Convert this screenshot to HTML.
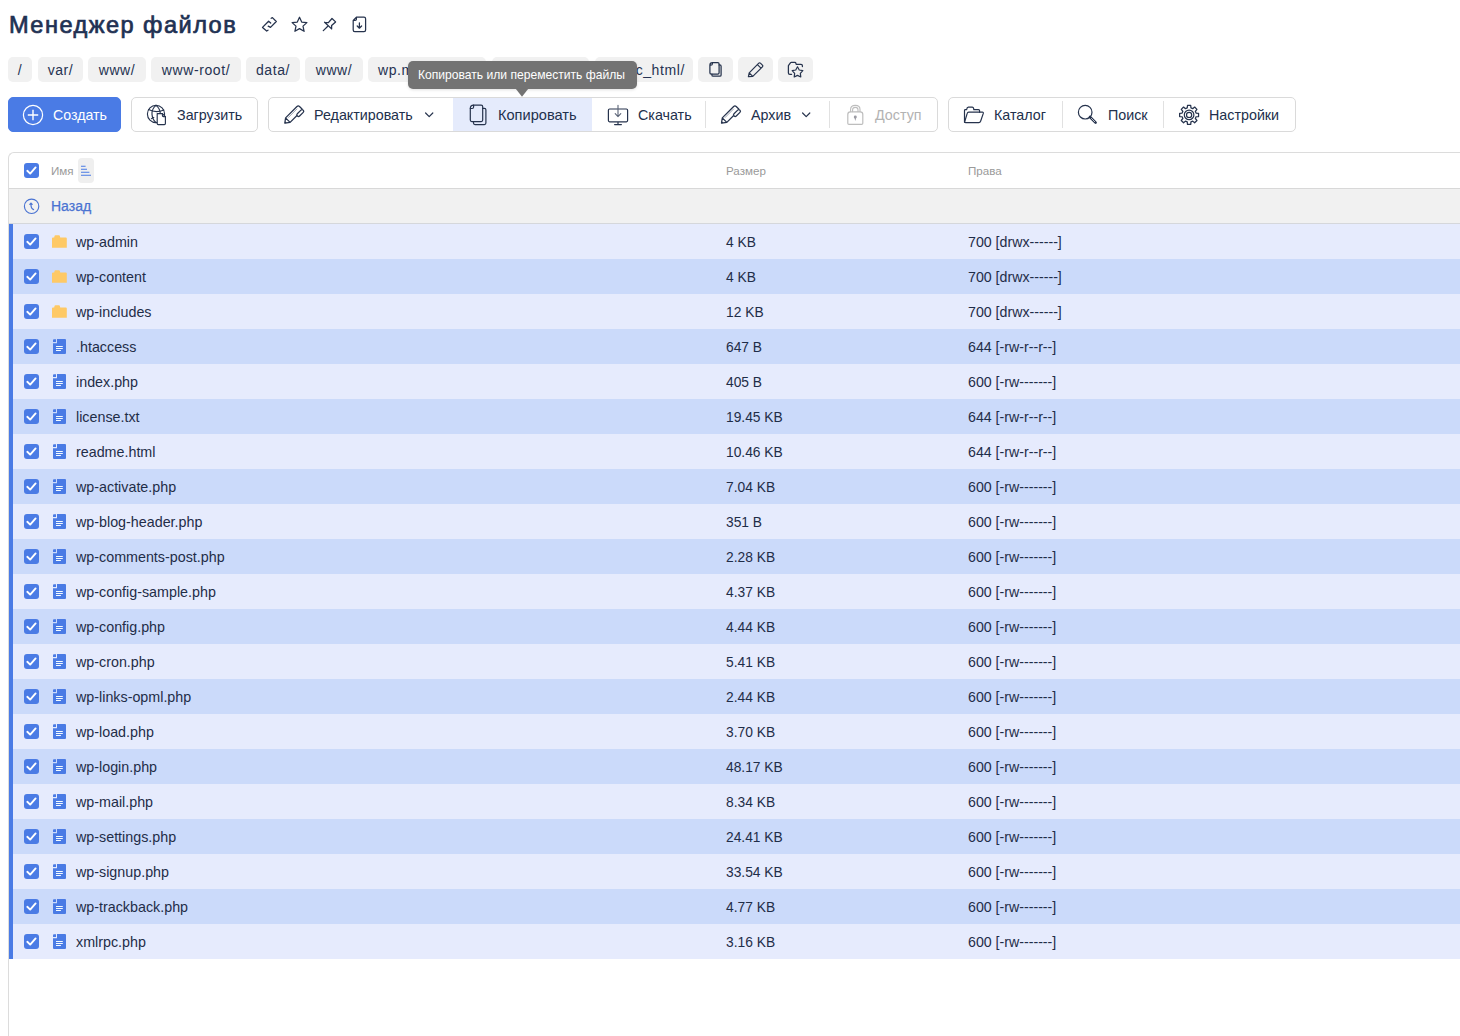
<!DOCTYPE html><html><head><meta charset="utf-8"><style>
*{box-sizing:border-box;margin:0;padding:0}
html,body{width:1460px;height:1036px;overflow:hidden;background:#fff}
body{position:relative;font-family:"Liberation Sans",sans-serif;color:#1f2d4a}
.a{position:absolute;white-space:nowrap}
.ic{position:absolute;overflow:visible}
.chip{position:absolute;top:57px;height:25px;background:#f1f1f1;border-radius:5px}
.btn{position:absolute;top:97px;height:35px;border:1px solid #dadada;border-radius:5px;background:#fff}
.sep{position:absolute;top:101px;width:1px;height:27px;background:#e1e1e1}
</style></head><body>

<div class="a" style="left:9px;top:10px;font-size:23.6px;line-height:30px;color:#1f3153;-webkit-text-stroke:0.7px #1f3153;letter-spacing:1.45px">Менеджер файлов</div>
<svg class="ic" style="left:258px;top:13px;width:24px;height:22px" viewBox="258 13 24 22"><path d="M271.2 18.3 L272.4 17.6 L276.3 21.5 L270.5 27.4 L268.2 26.2" fill="none" stroke="#26334d" stroke-width="1.3" stroke-linecap="round" stroke-linejoin="round" /><path d="M270.7 23 L268.6 21.2 L262.5 27.4 L266.7 31 L268 30.2" fill="none" stroke="#26334d" stroke-width="1.3" stroke-linecap="round" stroke-linejoin="round" /></svg>
<svg class="ic" style="left:290px;top:15px;width:20px;height:20px" viewBox="290 15 20 20"><path d="M299.5 17.2 L301.7 22.1 L306.9 22.6 L303 26.1 L304.1 31.3 L299.5 28.6 L294.9 31.3 L296 26.1 L292.1 22.6 L297.3 22.1 Z" fill="none" stroke="#26334d" stroke-width="1.25" stroke-linecap="round" stroke-linejoin="round" /></svg>
<svg class="ic" style="left:318px;top:13px;width:24px;height:22px" viewBox="318 13 24 22"><path d="M323.3 30.6 L327.8 26.2" fill="none" stroke="#26334d" stroke-width="1.3" stroke-linecap="round" stroke-linejoin="round" /><path d="M324.6 22.3 L331.6 28.9 M324.6 22.3 L328.4 22.6 L332 18.5 L335.6 21.9 L331.6 25.5 L331.6 28.9" fill="none" stroke="#26334d" stroke-width="1.3" stroke-linecap="round" stroke-linejoin="round" /></svg>
<svg class="ic" style="left:350px;top:15px;width:20px;height:20px" viewBox="350 15 20 20"><path d="M356.4 17.2 H364 Q365.6 17.2 365.6 18.8 V30 Q365.6 31.6 364 31.6 H354.8 Q353.2 31.6 353.2 30 V20.4 Z M356.4 17.2 V19.2 Q356.4 20.4 355.2 20.4 H353.2 M359.4 22.8 V28.2 M357.2 26 L359.4 28.2 L361.6 26" fill="none" stroke="#26334d" stroke-width="1.25" stroke-linecap="round" stroke-linejoin="round" /></svg>
<div class="chip" style="left:8px;width:24px"></div>
<div class="a" style="left:8px;width:24px;top:58px;line-height:25px;font-size:14px;letter-spacing:0.6px;color:#263352;text-align:center">/</div>
<div class="chip" style="left:38px;width:45px"></div>
<div class="a" style="left:38px;width:45px;top:58px;line-height:25px;font-size:14px;letter-spacing:0.6px;color:#263352;text-align:center">var/</div>
<div class="chip" style="left:88px;width:58px"></div>
<div class="a" style="left:88px;width:58px;top:58px;line-height:25px;font-size:14px;letter-spacing:0.6px;color:#263352;text-align:center">www/</div>
<div class="chip" style="left:151px;width:90px"></div>
<div class="a" style="left:151px;width:90px;top:58px;line-height:25px;font-size:14px;letter-spacing:0.6px;color:#263352;text-align:center">www-root/</div>
<div class="chip" style="left:246px;width:54px"></div>
<div class="a" style="left:246px;width:54px;top:58px;line-height:25px;font-size:14px;letter-spacing:0.6px;color:#263352;text-align:center">data/</div>
<div class="chip" style="left:305px;width:58px"></div>
<div class="a" style="left:305px;width:58px;top:58px;line-height:25px;font-size:14px;letter-spacing:0.6px;color:#263352;text-align:center">www/</div>
<div class="chip" style="left:368px;width:118px"></div>
<div class="a" style="left:378px;top:58px;line-height:25px;font-size:14px;letter-spacing:0.6px;color:#263352">wp.mysite.ru/</div>
<div class="chip" style="left:492px;width:97px"></div>
<div class="a" style="left:492px;width:97px;top:58px;line-height:25px;font-size:14px;letter-spacing:0.6px;color:#263352;text-align:center">wp-content/</div>
<div class="chip" style="left:595px;width:98px"></div>
<div class="a" style="left:595px;width:98px;top:58px;line-height:25px;font-size:14px;letter-spacing:0.6px;color:#263352;text-align:center">public_html/</div>
<div class="chip" style="left:698px;width:35px"></div>
<div class="chip" style="left:738px;width:35px"></div>
<div class="chip" style="left:778px;width:35px"></div>
<svg class="ic" style="left:705px;top:58px;width:22px;height:24px" viewBox="705 58 22 24"><path d="M712.4 62.6 H717.8 Q719.1 62.6 719.1 63.9 V72.7 Q719.1 74 717.8 74 H711.2 Q709.9 74 709.9 72.7 V65.2 Q709.9 62.6 712.4 62.6 Z M709.9 65.2 H710.9 Q712.4 65.2 712.4 63.7 V62.6" fill="none" stroke="#26334d" stroke-width="1.25" stroke-linecap="round" stroke-linejoin="round" /><path d="M719.1 64.9 H719.8 Q721.1 64.9 721.1 66.2 V74.9 Q721.1 76.2 719.8 76.2 H713.2 Q711.9 76.2 711.9 74.9 V74" fill="none" stroke="#26334d" stroke-width="1.25" stroke-linecap="round" stroke-linejoin="round" /></svg>
<svg class="ic" style="left:745px;top:58px;width:22px;height:24px" viewBox="745 58 22 24"><path d="M748.4 76.6 L749.2 72.8 L758.8 63.2 Q759.6 62.4 760.4 63.2 L762.4 65.2 Q763.2 66 762.4 66.8 L752.8 76.4 Z M749.2 72.8 L752.8 76.4 M757.4 64.6 L761 68.2" fill="none" stroke="#26334d" stroke-width="1.2" stroke-linecap="round" stroke-linejoin="round" /></svg>
<svg class="ic" style="left:785px;top:58px;width:22px;height:24px" viewBox="785 58 22 24"><path d="M791.6 74.3 H789.8 Q788.4 74.3 788.4 72.9 V65.6 L790.6 62.6 Q790.8 62.4 791.2 62.4 H795 Q795.6 62.4 795.8 63 L796.2 64.4 H801 Q802.4 64.4 802.4 65.8 V66.6" fill="none" stroke="#26334d" stroke-width="1.25" stroke-linecap="round" stroke-linejoin="round" /><path d="M797.50 66.80 L799.26 69.97 L802.83 70.67 L800.35 73.33 L800.79 76.93 L797.50 75.40 L794.21 76.93 L794.65 73.33 L792.17 70.67 L795.74 69.97 Z" fill="none" stroke="#26334d" stroke-width="1.2" stroke-linecap="round" stroke-linejoin="round" /></svg>
<div class="btn" style="left:8px;width:113px;background:#4a7be5;border-color:#4a7be5"></div>
<svg class="ic" style="left:20px;top:102px;width:26px;height:26px" viewBox="20 102 26 26"><circle cx="33" cy="115" r="9.6" fill="none" stroke="#fff" stroke-width="1.2"/><path d="M33 109.8 V120.2 M27.8 115 H38.2" stroke="#fff" stroke-width="1.4"/></svg>
<div class="a" style="left:53px;top:105px;font-size:14.2px;line-height:20px;color:#fff;">Создать</div>
<div class="btn" style="left:131px;width:127px"></div>
<svg class="ic" style="left:144px;top:102px;width:26px;height:26px" viewBox="144 102 26 26"><circle cx="156" cy="114" r="8.6" fill="none" stroke="#26334d" stroke-width="1.15"/><path d="M156 105.4 Q151.6 109 152 114.4 Q152.4 119.6 156 122.6 M156 105.4 Q160 108.6 160.2 113" fill="none" stroke="#26334d" stroke-width="1.15" stroke-linecap="round" stroke-linejoin="round" /><path d="M148.6 109.6 Q156 113.4 163.8 110" fill="none" stroke="#26334d" stroke-width="1.1" stroke-linecap="round" stroke-linejoin="round" /><path d="M151.4 118.6 Q152.6 117.8 153.8 117.4" fill="none" stroke="#26334d" stroke-width="1.1" stroke-linecap="round" stroke-linejoin="round" /><path d="M157.2 113.6 H162.4 L165.4 116.6 V123.6 Q165.4 124.6 164.4 124.6 H158.2 Q157.2 124.6 157.2 123.6 Z" fill="#fff" stroke="#26334d" stroke-width="1.15" stroke-linejoin="round"/><path d="M162.4 113.6 V115.6 Q162.4 116.6 163.4 116.6 H165.4" fill="none" stroke="#26334d" stroke-width="1.1" stroke-linecap="round" stroke-linejoin="round" /></svg>
<div class="a" style="left:177px;top:105px;font-size:14.3px;line-height:20px;color:#22304c;">Загрузить</div>
<div class="btn" style="left:268px;width:670px"></div>
<div class="a" style="left:453px;top:98px;width:139px;height:33px;background:#e5ebfc"></div>
<div class="sep" style="left:705px"></div><div class="sep" style="left:829px"></div>
<svg class="ic" style="left:280px;top:100px;width:28px;height:28px" viewBox="280 100 28 28"><g transform="translate(284.8 123.2) rotate(-45)"><path d="M4.3 -3.2 L0 0 L4.3 3.2 Z M4.3 -3.2 H20.4 Q22.2 -3.2 22.2 -1.4 V2.2 M4.3 3.2 H14" fill="none" stroke="#26334d" stroke-width="1.25" stroke-linecap="round" stroke-linejoin="round" /><path d="M6.6 -1.5 H18.6" fill="none" stroke="#8e96a6" stroke-width="0.8" stroke-linecap="round" stroke-linejoin="round" /><rect x="14" y="2.2" width="8.2" height="3.2" rx="1.5" fill="#fff" stroke="#26334d" stroke-width="1.25"/><path d="M0 0 L1.6 -1.2 L1.6 1.2 Z" fill="#26334d"/></g></svg>
<div class="a" style="left:314px;top:105px;font-size:14.3px;line-height:20px;color:#22304c;">Редактировать</div>
<svg class="ic" style="left:422px;top:108px;width:14px;height:12px" viewBox="422 108 14 12"><path d="M425.6 113 L429.20000000000005 116.6 L432.8 113" fill="none" stroke="#26334d" stroke-width="1.2" stroke-linecap="round" stroke-linejoin="round" /></svg>
<svg class="ic" style="left:466px;top:102px;width:24px;height:26px" viewBox="466 102 24 26"><path d="M473.6 105.2 H481.2 Q482.7 105.2 482.7 106.7 V120.1 Q482.7 121.6 481.2 121.6 H471.8 Q470.3 121.6 470.3 120.1 V108.5 Q470.3 105.2 473.6 105.2 Z" fill="none" stroke="#26334d" stroke-width="1.2" stroke-linecap="round" stroke-linejoin="round" /><path d="M470.3 108.5 H472.1 Q473.6 108.5 473.6 107 V105.2" fill="none" stroke="#26334d" stroke-width="1.2" stroke-linecap="round" stroke-linejoin="round" /><path d="M482.7 108.3 H484.4 Q485.9 108.3 485.9 109.8 V123.1 Q485.9 124.6 484.4 124.6 H475 Q473.5 124.6 473.5 123.1 V121.6" fill="none" stroke="#26334d" stroke-width="1.2" stroke-linecap="round" stroke-linejoin="round" /></svg>
<div class="a" style="left:498px;top:105px;font-size:14.6px;line-height:20px;color:#22304c;">Копировать</div>
<svg class="ic" style="left:604px;top:102px;width:28px;height:26px" viewBox="604 102 28 26"><path d="M609.6 109 H626.4 Q627.6 109 627.6 110.2 V120.6 Q627.6 121.8 626.4 121.8 H609.6 Q608.4 121.8 608.4 120.6 V110.2 Q608.4 109 609.6 109 Z M618 121.8 V124.6 M614.6 124.6 H621.4" fill="none" stroke="#26334d" stroke-width="1.2" stroke-linecap="round" stroke-linejoin="round" /><path d="M618 105.2 V116.6 M615.2 113.6 L618 116.6 L620.8 113.6" fill="none" stroke="#5c6578" stroke-width="1.1" stroke-linecap="round" stroke-linejoin="round" /></svg>
<div class="a" style="left:638px;top:105px;font-size:14.3px;line-height:20px;color:#22304c;">Скачать</div>
<svg class="ic" style="left:716px;top:100px;width:28px;height:28px" viewBox="716 100 28 28"><g transform="translate(721.5 123.2) rotate(-45)"><path d="M4.3 -3.2 L0 0 L4.3 3.2 Z M4.3 -3.2 H20.4 Q22.2 -3.2 22.2 -1.4 V2.2 M4.3 3.2 H14" fill="none" stroke="#26334d" stroke-width="1.25" stroke-linecap="round" stroke-linejoin="round" /><path d="M6.6 -1.5 H18.6" fill="none" stroke="#8e96a6" stroke-width="0.8" stroke-linecap="round" stroke-linejoin="round" /><rect x="14" y="2.2" width="8.2" height="3.2" rx="1.5" fill="#fff" stroke="#26334d" stroke-width="1.25"/><path d="M0 0 L1.6 -1.2 L1.6 1.2 Z" fill="#26334d"/></g></svg>
<div class="a" style="left:751px;top:105px;font-size:14.3px;line-height:20px;color:#22304c;">Архив</div>
<svg class="ic" style="left:799px;top:108px;width:14px;height:12px" viewBox="799 108 14 12"><path d="M802.6 113 L806.2 116.6 L809.8000000000001 113" fill="none" stroke="#26334d" stroke-width="1.2" stroke-linecap="round" stroke-linejoin="round" /></svg>
<svg class="ic" style="left:844px;top:102px;width:22px;height:26px" viewBox="844 102 22 26"><path d="M850.6 111.6 V109.4 Q850.6 105.4 855.3 105.4 Q860 105.4 860 109.4 V111.6 M852.6 111.6 V109.8 Q852.6 107.4 855.3 107.4 Q858 107.4 858 109.8 V111.6" fill="none" stroke="#bdbdbd" stroke-width="1.1" stroke-linecap="round" stroke-linejoin="round" /><path d="M850.4 111.8 H860.2 Q862.8 111.8 862.8 114.4 V123.2 Q862.8 124.4 861.6 124.4 H849 Q847.8 124.4 847.8 123.2 V114.4 Q847.8 111.8 850.4 111.8 Z" fill="none" stroke="#bdbdbd" stroke-width="1.2" stroke-linecap="round" stroke-linejoin="round" /><path d="M855.3 115.6 Q856.8 115.6 856.8 117 Q856.8 117.8 856 118.4 L855.3 121 L854.6 118.4 Q853.8 117.8 853.8 117 Q853.8 115.6 855.3 115.6 Z" fill="#9c9ca4"/></svg>
<div class="a" style="left:875px;top:105px;font-size:14.3px;line-height:20px;color:#b3b3b3;">Доступ</div>
<div class="btn" style="left:948px;width:348px"></div>
<div class="sep" style="left:1062px"></div><div class="sep" style="left:1163px"></div>
<svg class="ic" style="left:960px;top:104px;width:28px;height:22px" viewBox="960 104 28 22"><path d="M964.5 122.2 V110.4 Q964.5 109.6 965.4 109.6 H966.6 Q967 107.2 968.4 107.2 H972.2 Q973.4 107.2 973.6 108.4 L973.8 109.6 H978.4 Q979.6 109.6 979.6 110.8 V112.2" fill="none" stroke="#26334d" stroke-width="1.2" stroke-linecap="round" stroke-linejoin="round" /><path d="M964.6 122.2 L967.2 113.4 Q967.5 112.2 968.7 112.2 H982.4 Q983.6 112.2 983.3 113.4 L980.6 121.2 Q980.2 122.6 978.8 122.6 H965.6 Q964.6 122.6 964.6 121.6" fill="none" stroke="#26334d" stroke-width="1.2" stroke-linecap="round" stroke-linejoin="round" /></svg>
<div class="a" style="left:994px;top:105px;font-size:14.3px;line-height:20px;color:#22304c;">Каталог</div>
<svg class="ic" style="left:1074px;top:102px;width:26px;height:26px" viewBox="1074 102 26 26"><circle cx="1085.2" cy="112.2" r="6.8" fill="none" stroke="#26334d" stroke-width="1.2"/><path d="M1090 117 L1095.6 122.6" fill="none" stroke="#26334d" stroke-width="2.6" stroke-linecap="round" stroke-linejoin="round" /><path d="M1091.4 118.4 L1094.8 121.8" fill="none" stroke="#fff" stroke-width="0.7" stroke-linecap="round" stroke-linejoin="round" /></svg>
<div class="a" style="left:1108px;top:105px;font-size:14.3px;line-height:20px;color:#22304c;">Поиск</div>
<svg class="ic" style="left:1174px;top:100px;width:30px;height:30px" viewBox="1174 100 30 30"><path d="M1187.25 107.94 L1187.48 105.44 L1190.72 105.44 L1190.95 107.94 L1192.71 108.67 L1194.64 107.06 L1196.94 109.36 L1195.33 111.29 L1196.06 113.05 L1198.56 113.28 L1198.56 116.52 L1196.06 116.75 L1195.33 118.51 L1196.94 120.44 L1194.64 122.74 L1192.71 121.13 L1190.95 121.86 L1190.72 124.36 L1187.48 124.36 L1187.25 121.86 L1185.49 121.13 L1183.56 122.74 L1181.26 120.44 L1182.87 118.51 L1182.14 116.75 L1179.64 116.52 L1179.64 113.28 L1182.14 113.05 L1182.87 111.29 L1181.26 109.36 L1183.56 107.06 L1185.49 108.67 Z" fill="none" stroke="#26334d" stroke-width="1.25" stroke-linecap="round" stroke-linejoin="round" /><circle cx="1189.1" cy="114.9" r="4.8" fill="none" stroke="#26334d" stroke-width="1.2"/><circle cx="1189.1" cy="114.9" r="2.6" fill="none" stroke="#26334d" stroke-width="1.2"/></svg>
<div class="a" style="left:1209px;top:105px;font-size:14.3px;line-height:20px;color:#22304c;">Настройки</div>
<div class="a" style="left:8px;top:152px;width:1470px;height:900px;border-top:1px solid #dcdcdc;border-left:1px solid #dcdcdc;border-top-left-radius:6px"></div>
<div class="a" style="left:9px;top:188px;width:1451px;height:1px;background:#d8d8d8"></div>
<div class="a" style="left:9px;top:189px;width:1451px;height:34px;background:#f1f1f1"></div>
<div class="a" style="left:9px;top:223px;width:1451px;height:1px;background:#d5d7db"></div>
<svg class="ic" style="left:24px;top:163px;width:15px;height:15px" viewBox="24 163 15 15"><rect x="24" y="163" width="15" height="15" rx="3" fill="#4a7be5"/><path d="M27.3 170.8 L30.2 173.6 L35.6 167.4" fill="none" stroke="#fff" stroke-width="1.9" stroke-linecap="round" stroke-linejoin="round"/></svg>
<div class="a" style="left:51px;top:161px;font-size:11.6px;line-height:20px;color:#9a9a9a;">Имя</div>
<div class="a" style="left:78px;top:158px;width:16px;height:25px;background:#efefef;border-radius:4px"></div>
<svg class="ic" style="left:78px;top:158px;width:16px;height:25px" viewBox="78 158 16 25"><path d="M81 166.3 H85.6 M81 169.3 H87 M81 172.3 H89.4 M81 175.3 H91" stroke="#4a7be5" stroke-width="1.1"/></svg>
<div class="a" style="left:726px;top:161px;font-size:11.6px;line-height:20px;color:#9a9a9a;">Размер</div>
<div class="a" style="left:968px;top:161px;font-size:11.6px;line-height:20px;color:#9a9a9a;">Права</div>
<svg class="ic" style="left:22px;top:197px;width:20px;height:20px" viewBox="22 197 20 20"><circle cx="31.6" cy="206.3" r="7.2" fill="none" stroke="#4a73d2" stroke-width="1.15"/><path d="M29.8 204.4 L31 203 L32.2 204.4 M31 203.2 Q30.6 208.6 33.6 209.6" fill="none" stroke="#4a73d2" stroke-width="1.15" stroke-linecap="round" stroke-linejoin="round" /></svg>
<div class="a" style="left:51px;top:196px;font-size:14px;line-height:20px;color:#4a73d2;-webkit-text-stroke:0.25px #4a73d2">Назад</div>
<div class="a" style="left:9px;top:224px;width:1451px;height:35px;background:#e6ebfd"></div>
<div class="a" style="left:9px;top:224px;width:4px;height:35px;background:#4a7be5"></div>
<svg class="ic" style="left:20px;top:224px;width:60px;height:35px" viewBox="20 224 60 35"><rect x="24" y="234" width="15" height="15" rx="3" fill="#4a7be5"/><path d="M27.3 241.8 L30.2 244.6 L35.6 238.4" fill="none" stroke="#fff" stroke-width="1.9" stroke-linecap="round" stroke-linejoin="round"/><path d="M52.0 238.2 Q52.0 237.4 53.0 237.4 L54.2 237.4 L54.6 235.8 Q54.8 235.2 55.4 235.2 L59.0 235.2 Q59.6 235.2 59.8 235.8 L60.2 237.4 L65.8 237.4 Q66.8 237.4 66.8 238.4 L66.8 247.8 L52.0 247.8 Z" fill="#fec966"/></svg>
<div class="a" style="left:76px;top:232px;font-size:14.3px;line-height:20px;color:#1f2d48;">wp-admin</div>
<div class="a" style="left:726px;top:233px;font-size:13.8px;line-height:20px;color:#1f2d48;">4 KB</div>
<div class="a" style="left:968px;top:232px;font-size:14.2px;line-height:20px;color:#1f2d48;">700 [drwx------]</div>
<div class="a" style="left:9px;top:259px;width:1451px;height:35px;background:#cbdafa"></div>
<div class="a" style="left:9px;top:259px;width:4px;height:35px;background:#4a7be5"></div>
<svg class="ic" style="left:20px;top:259px;width:60px;height:35px" viewBox="20 259 60 35"><rect x="24" y="269" width="15" height="15" rx="3" fill="#4a7be5"/><path d="M27.3 276.8 L30.2 279.6 L35.6 273.4" fill="none" stroke="#fff" stroke-width="1.9" stroke-linecap="round" stroke-linejoin="round"/><path d="M52.0 273.2 Q52.0 272.4 53.0 272.4 L54.2 272.4 L54.6 270.8 Q54.8 270.2 55.4 270.2 L59.0 270.2 Q59.6 270.2 59.8 270.8 L60.2 272.4 L65.8 272.4 Q66.8 272.4 66.8 273.4 L66.8 282.8 L52.0 282.8 Z" fill="#fec966"/></svg>
<div class="a" style="left:76px;top:267px;font-size:14.3px;line-height:20px;color:#1f2d48;">wp-content</div>
<div class="a" style="left:726px;top:268px;font-size:13.8px;line-height:20px;color:#1f2d48;">4 KB</div>
<div class="a" style="left:968px;top:267px;font-size:14.2px;line-height:20px;color:#1f2d48;">700 [drwx------]</div>
<div class="a" style="left:9px;top:294px;width:1451px;height:35px;background:#e6ebfd"></div>
<div class="a" style="left:9px;top:294px;width:4px;height:35px;background:#4a7be5"></div>
<svg class="ic" style="left:20px;top:294px;width:60px;height:35px" viewBox="20 294 60 35"><rect x="24" y="304" width="15" height="15" rx="3" fill="#4a7be5"/><path d="M27.3 311.8 L30.2 314.6 L35.6 308.4" fill="none" stroke="#fff" stroke-width="1.9" stroke-linecap="round" stroke-linejoin="round"/><path d="M52.0 308.2 Q52.0 307.4 53.0 307.4 L54.2 307.4 L54.6 305.8 Q54.8 305.2 55.4 305.2 L59.0 305.2 Q59.6 305.2 59.8 305.8 L60.2 307.4 L65.8 307.4 Q66.8 307.4 66.8 308.4 L66.8 317.8 L52.0 317.8 Z" fill="#fec966"/></svg>
<div class="a" style="left:76px;top:302px;font-size:14.3px;line-height:20px;color:#1f2d48;">wp-includes</div>
<div class="a" style="left:726px;top:303px;font-size:13.8px;line-height:20px;color:#1f2d48;">12 KB</div>
<div class="a" style="left:968px;top:302px;font-size:14.2px;line-height:20px;color:#1f2d48;">700 [drwx------]</div>
<div class="a" style="left:9px;top:329px;width:1451px;height:35px;background:#cbdafa"></div>
<div class="a" style="left:9px;top:329px;width:4px;height:35px;background:#4a7be5"></div>
<svg class="ic" style="left:20px;top:329px;width:60px;height:35px" viewBox="20 329 60 35"><rect x="24" y="339" width="15" height="15" rx="3" fill="#4a7be5"/><path d="M27.3 346.8 L30.2 349.6 L35.6 343.4" fill="none" stroke="#fff" stroke-width="1.9" stroke-linecap="round" stroke-linejoin="round"/><path d="M57.0 339.0 L65.0 339.0 Q66.0 339.0 66.0 340.0 L66.0 353.0 Q66.0 354.0 65.0 354.0 L54.0 354.0 Q53.0 354.0 53.0 353.0 L53.0 343.3 L57.0 343.3 Z" fill="#4a7be5"/><path d="M53.0 342.0 L53.0 340.2 Q53.0 339.2 54.0 339.2 L56.0 339.2 L56.0 342.0 Z" fill="#4a7be5"/><path d="M56.0 346.5 L62.8 346.5 M56.0 348.5 L62.8 348.5 M56.0 350.5 L60.9 350.5" stroke="#f4fbff" stroke-width="1.05"/></svg>
<div class="a" style="left:76px;top:337px;font-size:14.3px;line-height:20px;color:#1f2d48;">.htaccess</div>
<div class="a" style="left:726px;top:338px;font-size:13.8px;line-height:20px;color:#1f2d48;">647 B</div>
<div class="a" style="left:968px;top:337px;font-size:14.2px;line-height:20px;color:#1f2d48;">644 [-rw-r--r--]</div>
<div class="a" style="left:9px;top:364px;width:1451px;height:35px;background:#e6ebfd"></div>
<div class="a" style="left:9px;top:364px;width:4px;height:35px;background:#4a7be5"></div>
<svg class="ic" style="left:20px;top:364px;width:60px;height:35px" viewBox="20 364 60 35"><rect x="24" y="374" width="15" height="15" rx="3" fill="#4a7be5"/><path d="M27.3 381.8 L30.2 384.6 L35.6 378.4" fill="none" stroke="#fff" stroke-width="1.9" stroke-linecap="round" stroke-linejoin="round"/><path d="M57.0 374.0 L65.0 374.0 Q66.0 374.0 66.0 375.0 L66.0 388.0 Q66.0 389.0 65.0 389.0 L54.0 389.0 Q53.0 389.0 53.0 388.0 L53.0 378.3 L57.0 378.3 Z" fill="#4a7be5"/><path d="M53.0 377.0 L53.0 375.2 Q53.0 374.2 54.0 374.2 L56.0 374.2 L56.0 377.0 Z" fill="#4a7be5"/><path d="M56.0 381.5 L62.8 381.5 M56.0 383.5 L62.8 383.5 M56.0 385.5 L60.9 385.5" stroke="#f4fbff" stroke-width="1.05"/></svg>
<div class="a" style="left:76px;top:372px;font-size:14.3px;line-height:20px;color:#1f2d48;">index.php</div>
<div class="a" style="left:726px;top:373px;font-size:13.8px;line-height:20px;color:#1f2d48;">405 B</div>
<div class="a" style="left:968px;top:372px;font-size:14.2px;line-height:20px;color:#1f2d48;">600 [-rw-------]</div>
<div class="a" style="left:9px;top:399px;width:1451px;height:35px;background:#cbdafa"></div>
<div class="a" style="left:9px;top:399px;width:4px;height:35px;background:#4a7be5"></div>
<svg class="ic" style="left:20px;top:399px;width:60px;height:35px" viewBox="20 399 60 35"><rect x="24" y="409" width="15" height="15" rx="3" fill="#4a7be5"/><path d="M27.3 416.8 L30.2 419.6 L35.6 413.4" fill="none" stroke="#fff" stroke-width="1.9" stroke-linecap="round" stroke-linejoin="round"/><path d="M57.0 409.0 L65.0 409.0 Q66.0 409.0 66.0 410.0 L66.0 423.0 Q66.0 424.0 65.0 424.0 L54.0 424.0 Q53.0 424.0 53.0 423.0 L53.0 413.3 L57.0 413.3 Z" fill="#4a7be5"/><path d="M53.0 412.0 L53.0 410.2 Q53.0 409.2 54.0 409.2 L56.0 409.2 L56.0 412.0 Z" fill="#4a7be5"/><path d="M56.0 416.5 L62.8 416.5 M56.0 418.5 L62.8 418.5 M56.0 420.5 L60.9 420.5" stroke="#f4fbff" stroke-width="1.05"/></svg>
<div class="a" style="left:76px;top:407px;font-size:14.3px;line-height:20px;color:#1f2d48;">license.txt</div>
<div class="a" style="left:726px;top:408px;font-size:13.8px;line-height:20px;color:#1f2d48;">19.45 KB</div>
<div class="a" style="left:968px;top:407px;font-size:14.2px;line-height:20px;color:#1f2d48;">644 [-rw-r--r--]</div>
<div class="a" style="left:9px;top:434px;width:1451px;height:35px;background:#e6ebfd"></div>
<div class="a" style="left:9px;top:434px;width:4px;height:35px;background:#4a7be5"></div>
<svg class="ic" style="left:20px;top:434px;width:60px;height:35px" viewBox="20 434 60 35"><rect x="24" y="444" width="15" height="15" rx="3" fill="#4a7be5"/><path d="M27.3 451.8 L30.2 454.6 L35.6 448.4" fill="none" stroke="#fff" stroke-width="1.9" stroke-linecap="round" stroke-linejoin="round"/><path d="M57.0 444.0 L65.0 444.0 Q66.0 444.0 66.0 445.0 L66.0 458.0 Q66.0 459.0 65.0 459.0 L54.0 459.0 Q53.0 459.0 53.0 458.0 L53.0 448.3 L57.0 448.3 Z" fill="#4a7be5"/><path d="M53.0 447.0 L53.0 445.2 Q53.0 444.2 54.0 444.2 L56.0 444.2 L56.0 447.0 Z" fill="#4a7be5"/><path d="M56.0 451.5 L62.8 451.5 M56.0 453.5 L62.8 453.5 M56.0 455.5 L60.9 455.5" stroke="#f4fbff" stroke-width="1.05"/></svg>
<div class="a" style="left:76px;top:442px;font-size:14.3px;line-height:20px;color:#1f2d48;">readme.html</div>
<div class="a" style="left:726px;top:443px;font-size:13.8px;line-height:20px;color:#1f2d48;">10.46 KB</div>
<div class="a" style="left:968px;top:442px;font-size:14.2px;line-height:20px;color:#1f2d48;">644 [-rw-r--r--]</div>
<div class="a" style="left:9px;top:469px;width:1451px;height:35px;background:#cbdafa"></div>
<div class="a" style="left:9px;top:469px;width:4px;height:35px;background:#4a7be5"></div>
<svg class="ic" style="left:20px;top:469px;width:60px;height:35px" viewBox="20 469 60 35"><rect x="24" y="479" width="15" height="15" rx="3" fill="#4a7be5"/><path d="M27.3 486.8 L30.2 489.6 L35.6 483.4" fill="none" stroke="#fff" stroke-width="1.9" stroke-linecap="round" stroke-linejoin="round"/><path d="M57.0 479.0 L65.0 479.0 Q66.0 479.0 66.0 480.0 L66.0 493.0 Q66.0 494.0 65.0 494.0 L54.0 494.0 Q53.0 494.0 53.0 493.0 L53.0 483.3 L57.0 483.3 Z" fill="#4a7be5"/><path d="M53.0 482.0 L53.0 480.2 Q53.0 479.2 54.0 479.2 L56.0 479.2 L56.0 482.0 Z" fill="#4a7be5"/><path d="M56.0 486.5 L62.8 486.5 M56.0 488.5 L62.8 488.5 M56.0 490.5 L60.9 490.5" stroke="#f4fbff" stroke-width="1.05"/></svg>
<div class="a" style="left:76px;top:477px;font-size:14.3px;line-height:20px;color:#1f2d48;">wp-activate.php</div>
<div class="a" style="left:726px;top:478px;font-size:13.8px;line-height:20px;color:#1f2d48;">7.04 KB</div>
<div class="a" style="left:968px;top:477px;font-size:14.2px;line-height:20px;color:#1f2d48;">600 [-rw-------]</div>
<div class="a" style="left:9px;top:504px;width:1451px;height:35px;background:#e6ebfd"></div>
<div class="a" style="left:9px;top:504px;width:4px;height:35px;background:#4a7be5"></div>
<svg class="ic" style="left:20px;top:504px;width:60px;height:35px" viewBox="20 504 60 35"><rect x="24" y="514" width="15" height="15" rx="3" fill="#4a7be5"/><path d="M27.3 521.8 L30.2 524.6 L35.6 518.4" fill="none" stroke="#fff" stroke-width="1.9" stroke-linecap="round" stroke-linejoin="round"/><path d="M57.0 514.0 L65.0 514.0 Q66.0 514.0 66.0 515.0 L66.0 528.0 Q66.0 529.0 65.0 529.0 L54.0 529.0 Q53.0 529.0 53.0 528.0 L53.0 518.3 L57.0 518.3 Z" fill="#4a7be5"/><path d="M53.0 517.0 L53.0 515.2 Q53.0 514.2 54.0 514.2 L56.0 514.2 L56.0 517.0 Z" fill="#4a7be5"/><path d="M56.0 521.5 L62.8 521.5 M56.0 523.5 L62.8 523.5 M56.0 525.5 L60.9 525.5" stroke="#f4fbff" stroke-width="1.05"/></svg>
<div class="a" style="left:76px;top:512px;font-size:14.3px;line-height:20px;color:#1f2d48;">wp-blog-header.php</div>
<div class="a" style="left:726px;top:513px;font-size:13.8px;line-height:20px;color:#1f2d48;">351 B</div>
<div class="a" style="left:968px;top:512px;font-size:14.2px;line-height:20px;color:#1f2d48;">600 [-rw-------]</div>
<div class="a" style="left:9px;top:539px;width:1451px;height:35px;background:#cbdafa"></div>
<div class="a" style="left:9px;top:539px;width:4px;height:35px;background:#4a7be5"></div>
<svg class="ic" style="left:20px;top:539px;width:60px;height:35px" viewBox="20 539 60 35"><rect x="24" y="549" width="15" height="15" rx="3" fill="#4a7be5"/><path d="M27.3 556.8 L30.2 559.6 L35.6 553.4" fill="none" stroke="#fff" stroke-width="1.9" stroke-linecap="round" stroke-linejoin="round"/><path d="M57.0 549.0 L65.0 549.0 Q66.0 549.0 66.0 550.0 L66.0 563.0 Q66.0 564.0 65.0 564.0 L54.0 564.0 Q53.0 564.0 53.0 563.0 L53.0 553.3 L57.0 553.3 Z" fill="#4a7be5"/><path d="M53.0 552.0 L53.0 550.2 Q53.0 549.2 54.0 549.2 L56.0 549.2 L56.0 552.0 Z" fill="#4a7be5"/><path d="M56.0 556.5 L62.8 556.5 M56.0 558.5 L62.8 558.5 M56.0 560.5 L60.9 560.5" stroke="#f4fbff" stroke-width="1.05"/></svg>
<div class="a" style="left:76px;top:547px;font-size:14.3px;line-height:20px;color:#1f2d48;">wp-comments-post.php</div>
<div class="a" style="left:726px;top:548px;font-size:13.8px;line-height:20px;color:#1f2d48;">2.28 KB</div>
<div class="a" style="left:968px;top:547px;font-size:14.2px;line-height:20px;color:#1f2d48;">600 [-rw-------]</div>
<div class="a" style="left:9px;top:574px;width:1451px;height:35px;background:#e6ebfd"></div>
<div class="a" style="left:9px;top:574px;width:4px;height:35px;background:#4a7be5"></div>
<svg class="ic" style="left:20px;top:574px;width:60px;height:35px" viewBox="20 574 60 35"><rect x="24" y="584" width="15" height="15" rx="3" fill="#4a7be5"/><path d="M27.3 591.8 L30.2 594.6 L35.6 588.4" fill="none" stroke="#fff" stroke-width="1.9" stroke-linecap="round" stroke-linejoin="round"/><path d="M57.0 584.0 L65.0 584.0 Q66.0 584.0 66.0 585.0 L66.0 598.0 Q66.0 599.0 65.0 599.0 L54.0 599.0 Q53.0 599.0 53.0 598.0 L53.0 588.3 L57.0 588.3 Z" fill="#4a7be5"/><path d="M53.0 587.0 L53.0 585.2 Q53.0 584.2 54.0 584.2 L56.0 584.2 L56.0 587.0 Z" fill="#4a7be5"/><path d="M56.0 591.5 L62.8 591.5 M56.0 593.5 L62.8 593.5 M56.0 595.5 L60.9 595.5" stroke="#f4fbff" stroke-width="1.05"/></svg>
<div class="a" style="left:76px;top:582px;font-size:14.3px;line-height:20px;color:#1f2d48;">wp-config-sample.php</div>
<div class="a" style="left:726px;top:583px;font-size:13.8px;line-height:20px;color:#1f2d48;">4.37 KB</div>
<div class="a" style="left:968px;top:582px;font-size:14.2px;line-height:20px;color:#1f2d48;">600 [-rw-------]</div>
<div class="a" style="left:9px;top:609px;width:1451px;height:35px;background:#cbdafa"></div>
<div class="a" style="left:9px;top:609px;width:4px;height:35px;background:#4a7be5"></div>
<svg class="ic" style="left:20px;top:609px;width:60px;height:35px" viewBox="20 609 60 35"><rect x="24" y="619" width="15" height="15" rx="3" fill="#4a7be5"/><path d="M27.3 626.8 L30.2 629.6 L35.6 623.4" fill="none" stroke="#fff" stroke-width="1.9" stroke-linecap="round" stroke-linejoin="round"/><path d="M57.0 619.0 L65.0 619.0 Q66.0 619.0 66.0 620.0 L66.0 633.0 Q66.0 634.0 65.0 634.0 L54.0 634.0 Q53.0 634.0 53.0 633.0 L53.0 623.3 L57.0 623.3 Z" fill="#4a7be5"/><path d="M53.0 622.0 L53.0 620.2 Q53.0 619.2 54.0 619.2 L56.0 619.2 L56.0 622.0 Z" fill="#4a7be5"/><path d="M56.0 626.5 L62.8 626.5 M56.0 628.5 L62.8 628.5 M56.0 630.5 L60.9 630.5" stroke="#f4fbff" stroke-width="1.05"/></svg>
<div class="a" style="left:76px;top:617px;font-size:14.3px;line-height:20px;color:#1f2d48;">wp-config.php</div>
<div class="a" style="left:726px;top:618px;font-size:13.8px;line-height:20px;color:#1f2d48;">4.44 KB</div>
<div class="a" style="left:968px;top:617px;font-size:14.2px;line-height:20px;color:#1f2d48;">600 [-rw-------]</div>
<div class="a" style="left:9px;top:644px;width:1451px;height:35px;background:#e6ebfd"></div>
<div class="a" style="left:9px;top:644px;width:4px;height:35px;background:#4a7be5"></div>
<svg class="ic" style="left:20px;top:644px;width:60px;height:35px" viewBox="20 644 60 35"><rect x="24" y="654" width="15" height="15" rx="3" fill="#4a7be5"/><path d="M27.3 661.8 L30.2 664.6 L35.6 658.4" fill="none" stroke="#fff" stroke-width="1.9" stroke-linecap="round" stroke-linejoin="round"/><path d="M57.0 654.0 L65.0 654.0 Q66.0 654.0 66.0 655.0 L66.0 668.0 Q66.0 669.0 65.0 669.0 L54.0 669.0 Q53.0 669.0 53.0 668.0 L53.0 658.3 L57.0 658.3 Z" fill="#4a7be5"/><path d="M53.0 657.0 L53.0 655.2 Q53.0 654.2 54.0 654.2 L56.0 654.2 L56.0 657.0 Z" fill="#4a7be5"/><path d="M56.0 661.5 L62.8 661.5 M56.0 663.5 L62.8 663.5 M56.0 665.5 L60.9 665.5" stroke="#f4fbff" stroke-width="1.05"/></svg>
<div class="a" style="left:76px;top:652px;font-size:14.3px;line-height:20px;color:#1f2d48;">wp-cron.php</div>
<div class="a" style="left:726px;top:653px;font-size:13.8px;line-height:20px;color:#1f2d48;">5.41 KB</div>
<div class="a" style="left:968px;top:652px;font-size:14.2px;line-height:20px;color:#1f2d48;">600 [-rw-------]</div>
<div class="a" style="left:9px;top:679px;width:1451px;height:35px;background:#cbdafa"></div>
<div class="a" style="left:9px;top:679px;width:4px;height:35px;background:#4a7be5"></div>
<svg class="ic" style="left:20px;top:679px;width:60px;height:35px" viewBox="20 679 60 35"><rect x="24" y="689" width="15" height="15" rx="3" fill="#4a7be5"/><path d="M27.3 696.8 L30.2 699.6 L35.6 693.4" fill="none" stroke="#fff" stroke-width="1.9" stroke-linecap="round" stroke-linejoin="round"/><path d="M57.0 689.0 L65.0 689.0 Q66.0 689.0 66.0 690.0 L66.0 703.0 Q66.0 704.0 65.0 704.0 L54.0 704.0 Q53.0 704.0 53.0 703.0 L53.0 693.3 L57.0 693.3 Z" fill="#4a7be5"/><path d="M53.0 692.0 L53.0 690.2 Q53.0 689.2 54.0 689.2 L56.0 689.2 L56.0 692.0 Z" fill="#4a7be5"/><path d="M56.0 696.5 L62.8 696.5 M56.0 698.5 L62.8 698.5 M56.0 700.5 L60.9 700.5" stroke="#f4fbff" stroke-width="1.05"/></svg>
<div class="a" style="left:76px;top:687px;font-size:14.3px;line-height:20px;color:#1f2d48;">wp-links-opml.php</div>
<div class="a" style="left:726px;top:688px;font-size:13.8px;line-height:20px;color:#1f2d48;">2.44 KB</div>
<div class="a" style="left:968px;top:687px;font-size:14.2px;line-height:20px;color:#1f2d48;">600 [-rw-------]</div>
<div class="a" style="left:9px;top:714px;width:1451px;height:35px;background:#e6ebfd"></div>
<div class="a" style="left:9px;top:714px;width:4px;height:35px;background:#4a7be5"></div>
<svg class="ic" style="left:20px;top:714px;width:60px;height:35px" viewBox="20 714 60 35"><rect x="24" y="724" width="15" height="15" rx="3" fill="#4a7be5"/><path d="M27.3 731.8 L30.2 734.6 L35.6 728.4" fill="none" stroke="#fff" stroke-width="1.9" stroke-linecap="round" stroke-linejoin="round"/><path d="M57.0 724.0 L65.0 724.0 Q66.0 724.0 66.0 725.0 L66.0 738.0 Q66.0 739.0 65.0 739.0 L54.0 739.0 Q53.0 739.0 53.0 738.0 L53.0 728.3 L57.0 728.3 Z" fill="#4a7be5"/><path d="M53.0 727.0 L53.0 725.2 Q53.0 724.2 54.0 724.2 L56.0 724.2 L56.0 727.0 Z" fill="#4a7be5"/><path d="M56.0 731.5 L62.8 731.5 M56.0 733.5 L62.8 733.5 M56.0 735.5 L60.9 735.5" stroke="#f4fbff" stroke-width="1.05"/></svg>
<div class="a" style="left:76px;top:722px;font-size:14.3px;line-height:20px;color:#1f2d48;">wp-load.php</div>
<div class="a" style="left:726px;top:723px;font-size:13.8px;line-height:20px;color:#1f2d48;">3.70 KB</div>
<div class="a" style="left:968px;top:722px;font-size:14.2px;line-height:20px;color:#1f2d48;">600 [-rw-------]</div>
<div class="a" style="left:9px;top:749px;width:1451px;height:35px;background:#cbdafa"></div>
<div class="a" style="left:9px;top:749px;width:4px;height:35px;background:#4a7be5"></div>
<svg class="ic" style="left:20px;top:749px;width:60px;height:35px" viewBox="20 749 60 35"><rect x="24" y="759" width="15" height="15" rx="3" fill="#4a7be5"/><path d="M27.3 766.8 L30.2 769.6 L35.6 763.4" fill="none" stroke="#fff" stroke-width="1.9" stroke-linecap="round" stroke-linejoin="round"/><path d="M57.0 759.0 L65.0 759.0 Q66.0 759.0 66.0 760.0 L66.0 773.0 Q66.0 774.0 65.0 774.0 L54.0 774.0 Q53.0 774.0 53.0 773.0 L53.0 763.3 L57.0 763.3 Z" fill="#4a7be5"/><path d="M53.0 762.0 L53.0 760.2 Q53.0 759.2 54.0 759.2 L56.0 759.2 L56.0 762.0 Z" fill="#4a7be5"/><path d="M56.0 766.5 L62.8 766.5 M56.0 768.5 L62.8 768.5 M56.0 770.5 L60.9 770.5" stroke="#f4fbff" stroke-width="1.05"/></svg>
<div class="a" style="left:76px;top:757px;font-size:14.3px;line-height:20px;color:#1f2d48;">wp-login.php</div>
<div class="a" style="left:726px;top:758px;font-size:13.8px;line-height:20px;color:#1f2d48;">48.17 KB</div>
<div class="a" style="left:968px;top:757px;font-size:14.2px;line-height:20px;color:#1f2d48;">600 [-rw-------]</div>
<div class="a" style="left:9px;top:784px;width:1451px;height:35px;background:#e6ebfd"></div>
<div class="a" style="left:9px;top:784px;width:4px;height:35px;background:#4a7be5"></div>
<svg class="ic" style="left:20px;top:784px;width:60px;height:35px" viewBox="20 784 60 35"><rect x="24" y="794" width="15" height="15" rx="3" fill="#4a7be5"/><path d="M27.3 801.8 L30.2 804.6 L35.6 798.4" fill="none" stroke="#fff" stroke-width="1.9" stroke-linecap="round" stroke-linejoin="round"/><path d="M57.0 794.0 L65.0 794.0 Q66.0 794.0 66.0 795.0 L66.0 808.0 Q66.0 809.0 65.0 809.0 L54.0 809.0 Q53.0 809.0 53.0 808.0 L53.0 798.3 L57.0 798.3 Z" fill="#4a7be5"/><path d="M53.0 797.0 L53.0 795.2 Q53.0 794.2 54.0 794.2 L56.0 794.2 L56.0 797.0 Z" fill="#4a7be5"/><path d="M56.0 801.5 L62.8 801.5 M56.0 803.5 L62.8 803.5 M56.0 805.5 L60.9 805.5" stroke="#f4fbff" stroke-width="1.05"/></svg>
<div class="a" style="left:76px;top:792px;font-size:14.3px;line-height:20px;color:#1f2d48;">wp-mail.php</div>
<div class="a" style="left:726px;top:793px;font-size:13.8px;line-height:20px;color:#1f2d48;">8.34 KB</div>
<div class="a" style="left:968px;top:792px;font-size:14.2px;line-height:20px;color:#1f2d48;">600 [-rw-------]</div>
<div class="a" style="left:9px;top:819px;width:1451px;height:35px;background:#cbdafa"></div>
<div class="a" style="left:9px;top:819px;width:4px;height:35px;background:#4a7be5"></div>
<svg class="ic" style="left:20px;top:819px;width:60px;height:35px" viewBox="20 819 60 35"><rect x="24" y="829" width="15" height="15" rx="3" fill="#4a7be5"/><path d="M27.3 836.8 L30.2 839.6 L35.6 833.4" fill="none" stroke="#fff" stroke-width="1.9" stroke-linecap="round" stroke-linejoin="round"/><path d="M57.0 829.0 L65.0 829.0 Q66.0 829.0 66.0 830.0 L66.0 843.0 Q66.0 844.0 65.0 844.0 L54.0 844.0 Q53.0 844.0 53.0 843.0 L53.0 833.3 L57.0 833.3 Z" fill="#4a7be5"/><path d="M53.0 832.0 L53.0 830.2 Q53.0 829.2 54.0 829.2 L56.0 829.2 L56.0 832.0 Z" fill="#4a7be5"/><path d="M56.0 836.5 L62.8 836.5 M56.0 838.5 L62.8 838.5 M56.0 840.5 L60.9 840.5" stroke="#f4fbff" stroke-width="1.05"/></svg>
<div class="a" style="left:76px;top:827px;font-size:14.3px;line-height:20px;color:#1f2d48;">wp-settings.php</div>
<div class="a" style="left:726px;top:828px;font-size:13.8px;line-height:20px;color:#1f2d48;">24.41 KB</div>
<div class="a" style="left:968px;top:827px;font-size:14.2px;line-height:20px;color:#1f2d48;">600 [-rw-------]</div>
<div class="a" style="left:9px;top:854px;width:1451px;height:35px;background:#e6ebfd"></div>
<div class="a" style="left:9px;top:854px;width:4px;height:35px;background:#4a7be5"></div>
<svg class="ic" style="left:20px;top:854px;width:60px;height:35px" viewBox="20 854 60 35"><rect x="24" y="864" width="15" height="15" rx="3" fill="#4a7be5"/><path d="M27.3 871.8 L30.2 874.6 L35.6 868.4" fill="none" stroke="#fff" stroke-width="1.9" stroke-linecap="round" stroke-linejoin="round"/><path d="M57.0 864.0 L65.0 864.0 Q66.0 864.0 66.0 865.0 L66.0 878.0 Q66.0 879.0 65.0 879.0 L54.0 879.0 Q53.0 879.0 53.0 878.0 L53.0 868.3 L57.0 868.3 Z" fill="#4a7be5"/><path d="M53.0 867.0 L53.0 865.2 Q53.0 864.2 54.0 864.2 L56.0 864.2 L56.0 867.0 Z" fill="#4a7be5"/><path d="M56.0 871.5 L62.8 871.5 M56.0 873.5 L62.8 873.5 M56.0 875.5 L60.9 875.5" stroke="#f4fbff" stroke-width="1.05"/></svg>
<div class="a" style="left:76px;top:862px;font-size:14.3px;line-height:20px;color:#1f2d48;">wp-signup.php</div>
<div class="a" style="left:726px;top:863px;font-size:13.8px;line-height:20px;color:#1f2d48;">33.54 KB</div>
<div class="a" style="left:968px;top:862px;font-size:14.2px;line-height:20px;color:#1f2d48;">600 [-rw-------]</div>
<div class="a" style="left:9px;top:889px;width:1451px;height:35px;background:#cbdafa"></div>
<div class="a" style="left:9px;top:889px;width:4px;height:35px;background:#4a7be5"></div>
<svg class="ic" style="left:20px;top:889px;width:60px;height:35px" viewBox="20 889 60 35"><rect x="24" y="899" width="15" height="15" rx="3" fill="#4a7be5"/><path d="M27.3 906.8 L30.2 909.6 L35.6 903.4" fill="none" stroke="#fff" stroke-width="1.9" stroke-linecap="round" stroke-linejoin="round"/><path d="M57.0 899.0 L65.0 899.0 Q66.0 899.0 66.0 900.0 L66.0 913.0 Q66.0 914.0 65.0 914.0 L54.0 914.0 Q53.0 914.0 53.0 913.0 L53.0 903.3 L57.0 903.3 Z" fill="#4a7be5"/><path d="M53.0 902.0 L53.0 900.2 Q53.0 899.2 54.0 899.2 L56.0 899.2 L56.0 902.0 Z" fill="#4a7be5"/><path d="M56.0 906.5 L62.8 906.5 M56.0 908.5 L62.8 908.5 M56.0 910.5 L60.9 910.5" stroke="#f4fbff" stroke-width="1.05"/></svg>
<div class="a" style="left:76px;top:897px;font-size:14.3px;line-height:20px;color:#1f2d48;">wp-trackback.php</div>
<div class="a" style="left:726px;top:898px;font-size:13.8px;line-height:20px;color:#1f2d48;">4.77 KB</div>
<div class="a" style="left:968px;top:897px;font-size:14.2px;line-height:20px;color:#1f2d48;">600 [-rw-------]</div>
<div class="a" style="left:9px;top:924px;width:1451px;height:35px;background:#e6ebfd"></div>
<div class="a" style="left:9px;top:924px;width:4px;height:35px;background:#4a7be5"></div>
<svg class="ic" style="left:20px;top:924px;width:60px;height:35px" viewBox="20 924 60 35"><rect x="24" y="934" width="15" height="15" rx="3" fill="#4a7be5"/><path d="M27.3 941.8 L30.2 944.6 L35.6 938.4" fill="none" stroke="#fff" stroke-width="1.9" stroke-linecap="round" stroke-linejoin="round"/><path d="M57.0 934.0 L65.0 934.0 Q66.0 934.0 66.0 935.0 L66.0 948.0 Q66.0 949.0 65.0 949.0 L54.0 949.0 Q53.0 949.0 53.0 948.0 L53.0 938.3 L57.0 938.3 Z" fill="#4a7be5"/><path d="M53.0 937.0 L53.0 935.2 Q53.0 934.2 54.0 934.2 L56.0 934.2 L56.0 937.0 Z" fill="#4a7be5"/><path d="M56.0 941.5 L62.8 941.5 M56.0 943.5 L62.8 943.5 M56.0 945.5 L60.9 945.5" stroke="#f4fbff" stroke-width="1.05"/></svg>
<div class="a" style="left:76px;top:932px;font-size:14.3px;line-height:20px;color:#1f2d48;">xmlrpc.php</div>
<div class="a" style="left:726px;top:933px;font-size:13.8px;line-height:20px;color:#1f2d48;">3.16 KB</div>
<div class="a" style="left:968px;top:932px;font-size:14.2px;line-height:20px;color:#1f2d48;">600 [-rw-------]</div>
<div class="a" style="left:408px;top:61px;width:229px;height:28px;background:#737373;border-radius:5px;box-shadow:0 1px 3px rgba(0,0,0,.12)"></div>
<div class="a" style="left:418px;top:65px;font-size:12.1px;line-height:20px;color:#fff;">Копировать или переместить файлы</div>
<svg class="ic" style="left:514px;top:88px;width:16px;height:10px" viewBox="514 88 16 10"><path d="M515.5 88.4 H528.5 L522 96.8 Z" fill="#737373"/></svg>
</body></html>
